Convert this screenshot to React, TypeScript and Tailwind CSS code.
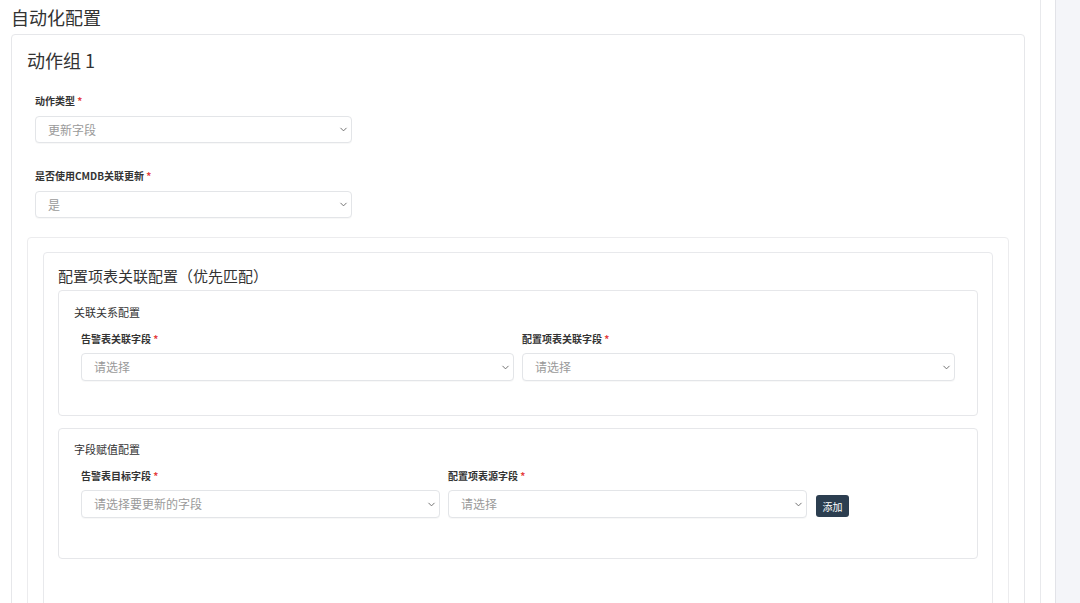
import { ChevronDown } from 'lucide-react';

const font = { fontFamily: '"Noto Sans CJK SC", "Noto Sans", sans-serif' };

function Label({ text }: { text: string }) {
  return (
    <div className="text-[10px] leading-[14px] font-bold text-[#333]">
      {text} <span className="text-[#e53e3e]">*</span>
    </div>
  );
}

function FakeSelect({ value, className }: { value: string; className: string }) {
  return (
    <div
      className={`flex items-center justify-between border border-[#e3e5e8] rounded-[4px] bg-white pl-[12px] pr-[2px] shadow-[0_1px_1px_rgba(0,0,0,0.03)] ${className}`}
    >
      <span className="text-[12px] text-[#9a9a9a]">{value}</span>
      <ChevronDown size={11} strokeWidth={2} className="text-[#666]" />
    </div>
  );
}

export default function App() {
  return (
    <div className="w-[1080px] h-[603px] overflow-hidden flex bg-white" style={font}>
      {/* main scroll area */}
      <div className="w-[1041px] border-r border-[#e8e9ec] shrink-0">
        <div className="h-[34px] flex items-center pl-[11px] text-[18px] text-[#333]">自动化配置</div>

        <div className="ml-[11px] w-[1014px] border border-[#e6e7ea] rounded-[4px] px-[15px] pt-[12px] pb-24">
          <div className="text-[18px] leading-[26px] text-[#333]">动作组 1</div>

          {/* 动作类型 */}
          <div className="px-[8px] mt-[21px]">
            <Label text="动作类型" />
            <FakeSelect value="更新字段" className="mt-[8px] w-[317px] h-[27px]" />
          </div>

          {/* CMDB */}
          <div className="px-[8px] mt-[26px]">
            <Label text="是否使用CMDB关联更新" />
            <FakeSelect value="是" className="mt-[8px] w-[317px] h-[27px]" />
          </div>

          {/* nested container */}
          <div className="mt-[19px] border border-[#ececee] rounded-[4px] px-[15px] pt-[14px] pb-20">
            <div className="border border-[#e8e9ec] rounded-[4px] px-[14px] pt-[12px] pb-20">
              <div className="text-[15px] leading-[22px] text-[#333]">配置项表关联配置（优先匹配）</div>

              {/* 关联关系配置 */}
              <div className="mt-[3px] border border-[#e6e7ea] rounded-[4px] pl-[15px] pr-[22px] pt-[13px] h-[126px]">
                <div className="text-[11px] leading-[16px] text-[#333]">关联关系配置</div>
                <div className="mt-[12px] pl-[7px] flex gap-[8px]">
                  <div className="w-[433px]">
                    <Label text="告警表关联字段" />
                    <FakeSelect value="请选择" className="mt-[7px] w-[433px] h-[28px]" />
                  </div>
                  <div className="w-[433px]">
                    <Label text="配置项表关联字段" />
                    <FakeSelect value="请选择" className="mt-[7px] w-[433px] h-[28px]" />
                  </div>
                </div>
              </div>

              {/* 字段赋值配置 */}
              <div className="mt-[12px] border border-[#e6e7ea] rounded-[4px] pl-[15px] pr-[22px] pt-[12px] h-[131px]">
                <div className="text-[11px] leading-[16px] text-[#333]">字段赋值配置</div>
                <div className="mt-[12px] pl-[7px] flex gap-[8px] items-end">
                  <div className="w-[359px]">
                    <Label text="告警表目标字段" />
                    <FakeSelect value="请选择要更新的字段" className="mt-[7px] w-[359px] h-[28px]" />
                  </div>
                  <div className="w-[359px]">
                    <Label text="配置项表源字段" />
                    <FakeSelect value="请选择" className="mt-[7px] w-[359px] h-[28px]" />
                  </div>
                  <button className="ml-px mb-[1px] h-[22px] w-[33px] rounded-[3px] bg-[#2c3e50] text-white text-[10px]">
                    添加
                  </button>
                </div>
              </div>
            </div>
          </div>
        </div>
      </div>

      {/* right side panel */}
      <div className="ml-[14px] flex-1 border-l border-[#e2e3e8] bg-[#f4f5f9]" />
    </div>
  );
}
